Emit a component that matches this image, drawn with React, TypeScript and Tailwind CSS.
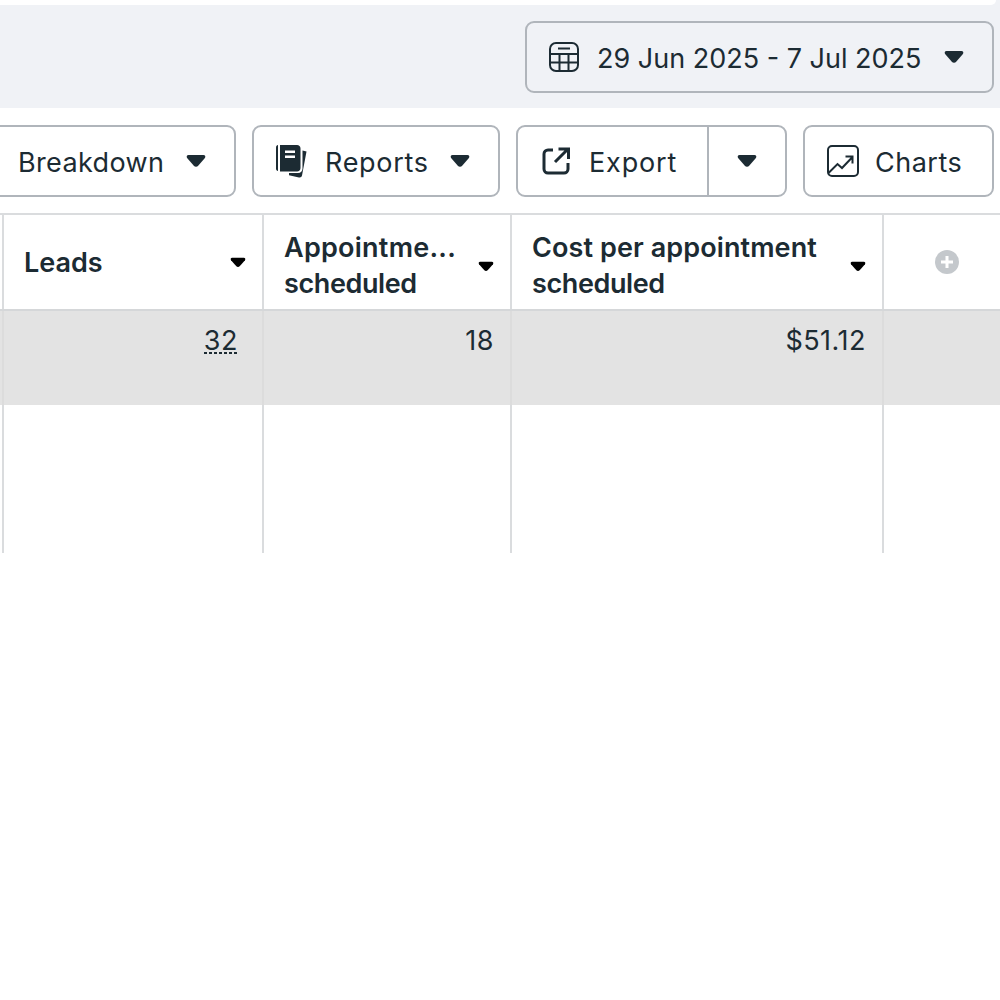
import React from "react";

const Caret = ({ className = "" }: { className?: string }) => (
  <svg viewBox="0 0 20 14" className={`shrink-0 ${className}`} fill="currentColor">
    <path d="M2.500 1h15c1.600 0 2.400 1.800 1.400 3l-6.500 7.500c-1.500 1.700-3.300 1.700-4.800 0L1.100 4C.1 2.800.9 1 2.500 1z" />
  </svg>
);

const CalendarIcon = () => (
  <svg viewBox="0 0 30 30" className="w-[30px] h-[30px] shrink-0" fill="none" stroke="currentColor" strokeWidth="2">
    <rect x="1" y="1" width="28" height="28" rx="6" />
    <path d="M9 6.500h12M1 12h28M1 20.500h28M10.500 12v17M19.500 12v17" />
  </svg>
);

const ReportsIcon = () => (
  <svg viewBox="0 0 32 34" className="w-[32px] h-[34px] shrink-0" fill="currentColor">
    <path d="M1 3.500C1 2 1.800 1 3 1v26c-1.200 0-2-1-2-2.500z" />
    <path d="M5 1h17c2 0 3.500 1.500 3.500 3.500V24c0 2-1.500 3.500-3.500 3.500H5zM10 6.500v2.500h10V6.500zM10 11.500V14h10v-2.500z" fillRule="evenodd" />
    <path d="M27.500 6.500L31.500 7.500 27 31.500c-.3 1.500-1.500 2.200-3 1.900L14 31.200 14 29h9c2.800 0 4.500-1.800 4.500-4.500z" />
  </svg>
);

const ExportIcon = () => (
  <svg viewBox="0 0 28 28" className="w-[28px] h-[28px] shrink-0" fill="none" stroke="currentColor" strokeWidth="3">
    <path d="M11 3H6a4 4 0 0 0-4 4v15a4 4 0 0 0 4 4h16a4 4 0 0 0 4-4v-6" />
    <path d="M13 15L25.500 2.500M16.500 2h10v10" />
  </svg>
);

const ChartsIcon = () => (
  <svg viewBox="0 0 32 32" className="w-[32px] h-[32px] shrink-0" fill="none" stroke="currentColor" strokeWidth="2">
    <rect x="1" y="1" width="30" height="30" rx="4" />
    <path d="M1.500 28l9-9 4.500 4 10-10.500M18.500 11.500h7v7" />
  </svg>
);

const btn = "h-[72px] shrink-0 flex items-center rounded-[9px] border-2 border-[#b0b5bb] bg-white text-[#1c2b33]";

const HeaderCell = ({ children, width, caretClass, textClass = "" }: { children: React.ReactNode; width: string; caretClass: string; textClass?: string }) => (
  <div className={`${width} shrink-0 border-r-2 border-[#dadcde] flex items-center justify-between pl-5 pr-[16px] text-[27px] leading-[36px] font-semibold text-[#1c2b33]`}>
    <div className={textClass}>{children}</div>
    <Caret className={`w-[16px] h-[11px] text-black ${caretClass}`} />
  </div>
);

export default function App() {
  return (
    <div className="w-[1000px] h-[1000px] bg-white overflow-hidden text-[#1c2b33] font-['Inter','Noto_Sans',sans-serif]">
      <div className="h-[108px] bg-[#f0f2f6] flex flex-col">
        <div className="h-[5px] w-[996px] bg-white rounded-br-[6px]" />
        <div className="flex justify-end pr-[6px] pt-[16px]">
          <button className="w-[469px] h-[72px] flex items-center rounded-[9px] border-2 border-[#b0b5bb] pl-[22px] pr-[28px] text-[27px]">
            <CalendarIcon />
            <span className="ml-[18px] pt-[4px] flex-1 text-left whitespace-nowrap">29 Jun 2025 - 7 Jul 2025</span>
            <Caret className="w-[20px] h-[14px]" />
          </button>
        </div>
      </div>

      <div className="flex justify-end gap-4 pr-[6px] pt-[17px] overflow-hidden">
        <button className={`${btn} w-[280px] pl-[60px] pr-[28px] justify-between text-[27px]`}>
          <span className="pt-[4px] tracking-[0.35px]">Breakdown</span>
          <Caret className="w-[20px] h-[14px]" />
        </button>
        <button className={`${btn} w-[248px] pl-[21px] pr-[28px] text-[27px]`}>
          <ReportsIcon />
          <span className="ml-[18px] pt-[4px] flex-1 text-left tracking-[0.7px]">Reports</span>
          <Caret className="w-[20px] h-[14px]" />
        </button>
        <div className={`${btn} w-[271px] text-[27px]`}>
          <div className="w-[191px] h-full flex items-center pl-[24px] border-r-2 border-[#b0b5bb]">
            <ExportIcon />
            <span className="ml-[19px] pt-[4px] tracking-[0.85px]">Export</span>
          </div>
          <div className="flex-1 flex justify-center">
            <Caret className="w-[20px] h-[14px]" />
          </div>
        </div>
        <button className={`${btn} w-[191px] pl-[22px] text-[27px]`}>
          <ChartsIcon />
          <span className="ml-[16px] pt-[4px] tracking-[0.5px]">Charts</span>
        </button>
      </div>

      <div className="mt-[16px] border-t-2 border-[#dadcde]">
        <div className="flex h-[96px] border-b-2 border-[#d5d7d9]">
          <div className="w-[4px] shrink-0 border-r-2 border-[#dadcde]" />
          <HeaderCell width="w-[260px]" caretClass="" textClass="pt-[2px]">Leads</HeaderCell>
          <HeaderCell width="w-[248px]" caretClass="mt-[8px]" textClass="pt-[7px]">
            <span className="tracking-[0.25px]">Appointme...</span>
            <br />
            <span className="tracking-[-0.4px]">scheduled</span>
          </HeaderCell>
          <HeaderCell width="w-[372px]" caretClass="mt-[8px]" textClass="pt-[7px]">
            <span className="tracking-[0.1px]">Cost per appointment</span>
            <br />
            <span className="tracking-[-0.4px]">scheduled</span>
          </HeaderCell>
          <div className="flex-1 flex items-center justify-center pl-[10px]">
            <svg viewBox="0 0 24 24" className="w-[24px] h-[24px]">
              <circle cx="12" cy="12" r="12" fill="#c4c8cc" />
              <path d="M12 6v12M6 12h12" stroke="#fff" strokeWidth="3" />
            </svg>
          </div>
        </div>
        <div className="flex h-[94px] bg-[#e3e3e3] text-[27px] leading-[36px] tracking-[0.5px]">
          <div className="w-[4px] shrink-0 border-r-2 border-[#dcdcdc]" />
          <div className="w-[260px] shrink-0 border-r-2 border-[#dcdcdc] pt-[12px] pr-[24px] text-right">
            <span className="inline-block h-[31px] bg-[repeating-linear-gradient(90deg,#1c2b33_0_3px,transparent_3px_5px)] bg-[size:100%_2px] bg-bottom bg-no-repeat">32</span>
          </div>
          <div className="w-[248px] shrink-0 border-r-2 border-[#dcdcdc] pt-[12px] pr-[16px] text-right">18</div>
          <div className="w-[372px] shrink-0 border-r-2 border-[#dcdcdc] pt-[12px] pr-[16px] text-right">$51.12</div>
          <div className="flex-1" />
        </div>
        <div className="flex h-[148px]">
          <div className="w-[4px] shrink-0 border-r-2 border-[#dadcde]" />
          <div className="w-[260px] shrink-0 border-r-2 border-[#dadcde]" />
          <div className="w-[248px] shrink-0 border-r-2 border-[#dadcde]" />
          <div className="w-[372px] shrink-0 border-r-2 border-[#dadcde]" />
        </div>
      </div>
    </div>
  );
}
